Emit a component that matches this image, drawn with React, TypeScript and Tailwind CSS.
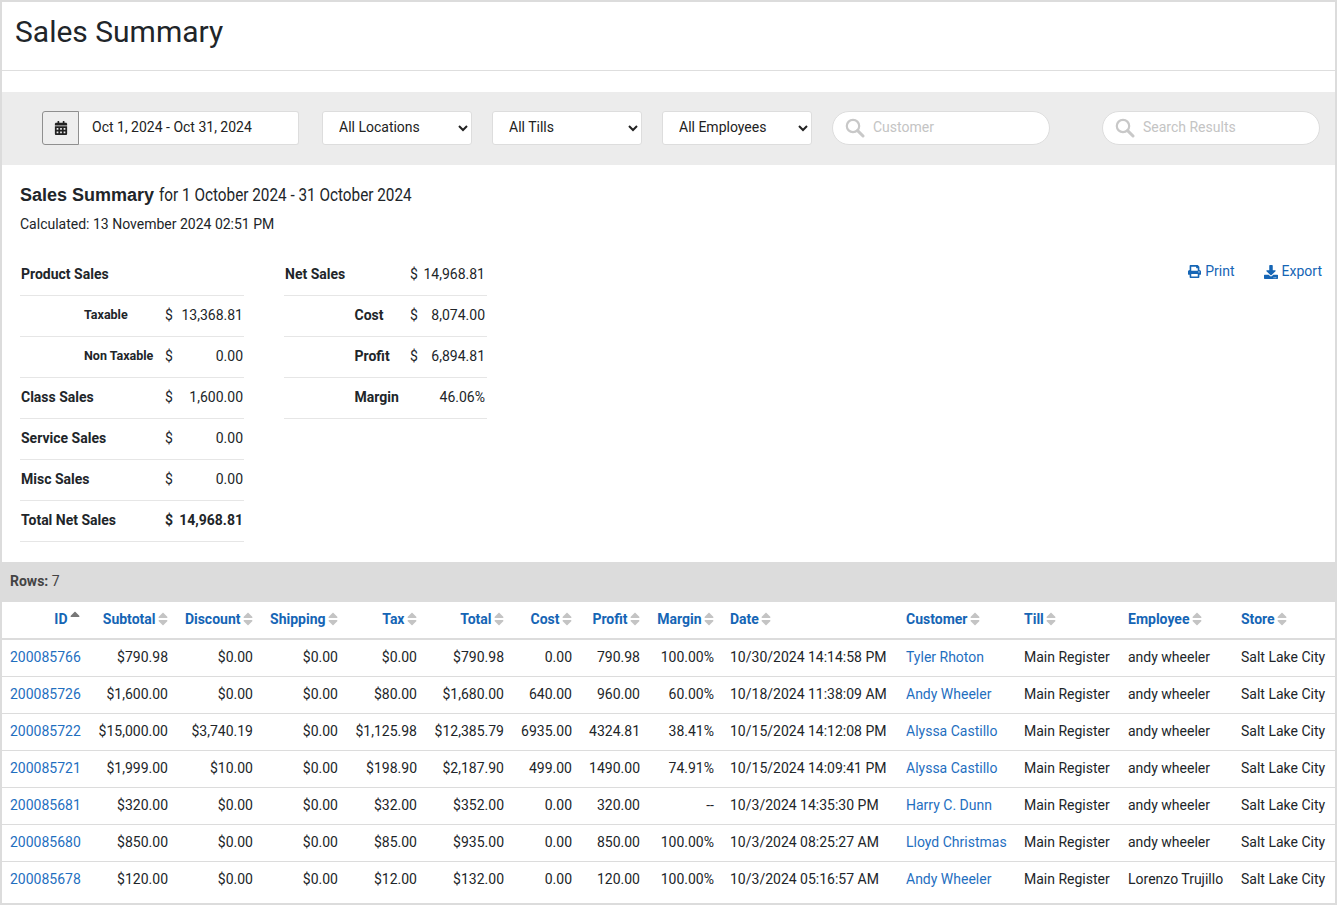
import { FaCalendarAlt, FaDownload, FaPrint, FaSort, FaSortUp } from "react-icons/fa";

const columns = [
  { label: "ID", w: "w-[86px]", right: true },
  { label: "Subtotal", w: "w-[88px]", right: true },
  { label: "Discount", w: "w-[85px]", right: true },
  { label: "Shipping", w: "w-[85px]", right: true },
  { label: "Tax", w: "w-[79px]", right: true },
  { label: "Total", w: "w-[87px]", right: true },
  { label: "Cost", w: "w-[68px]", right: true },
  { label: "Profit", w: "w-[68px]", right: true },
  { label: "Margin", w: "w-[74px]", right: true },
  { label: "Date", w: "w-[176px]", right: false },
  { label: "Customer", w: "w-[118px]", right: false },
  { label: "Till", w: "w-[104px]", right: false },
  { label: "Employee", w: "w-[113px]", right: false },
  { label: "Store", w: "w-[102px]", right: false },
];

const rows = [
  ["200085766", "$790.98", "$0.00", "$0.00", "$0.00", "$790.98", "0.00", "790.98", "100.00%", "10/30/2024 14:14:58 PM", "Tyler Rhoton", "Main Register", "andy wheeler", "Salt Lake City"],
  ["200085726", "$1,600.00", "$0.00", "$0.00", "$80.00", "$1,680.00", "640.00", "960.00", "60.00%", "10/18/2024 11:38:09 AM", "Andy Wheeler", "Main Register", "andy wheeler", "Salt Lake City"],
  ["200085722", "$15,000.00", "$3,740.19", "$0.00", "$1,125.98", "$12,385.79", "6935.00", "4324.81", "38.41%", "10/15/2024 14:12:08 PM", "Alyssa Castillo", "Main Register", "andy wheeler", "Salt Lake City"],
  ["200085721", "$1,999.00", "$10.00", "$0.00", "$198.90", "$2,187.90", "499.00", "1490.00", "74.91%", "10/15/2024 14:09:41 PM", "Alyssa Castillo", "Main Register", "andy wheeler", "Salt Lake City"],
  ["200085681", "$320.00", "$0.00", "$0.00", "$32.00", "$352.00", "0.00", "320.00", "--", "10/3/2024 14:35:30 PM", "Harry C. Dunn", "Main Register", "andy wheeler", "Salt Lake City"],
  ["200085680", "$850.00", "$0.00", "$0.00", "$85.00", "$935.00", "0.00", "850.00", "100.00%", "10/3/2024 08:25:27 AM", "Lloyd Christmas", "Main Register", "andy wheeler", "Salt Lake City"],
  ["200085678", "$120.00", "$0.00", "$0.00", "$12.00", "$132.00", "0.00", "120.00", "100.00%", "10/3/2024 05:16:57 AM", "Andy Wheeler", "Main Register", "Lorenzo Trujillo", "Salt Lake City"],
];

function SummaryRow({ label, sub, small, dollar, value, bold }: { label: string; sub?: boolean; small?: boolean; dollar?: boolean; value?: string; bold?: boolean }) {
  return (
    <div className={`flex h-[41px] items-center border-b border-[#e6e6e6] pb-[2px] pr-[1px] ${bold ? "font-bold" : ""}`}>
      <span className={`font-bold ${sub ? "ml-[64px]" : "ml-[1px]"} ${small ? "text-[12.5px]" : ""}`}>{label}</span>
      <span className="ml-auto flex w-[78px] shrink-0 justify-between">
        <span>{dollar ? "$" : ""}</span>
        <span>{value}</span>
      </span>
    </div>
  );
}

function NetRow({ label, sub, dollar, value }: { label: string; sub?: boolean; dollar?: boolean; value: string }) {
  return (
    <div className="flex h-[41px] items-center border-b border-[#e6e6e6] pb-[2px] pr-[2px]">
      <span className={`font-bold ${sub ? "ml-[70.5px]" : "ml-[1px]"}`}>{label}</span>
      <span className="ml-auto flex w-[75px] shrink-0 justify-between">
        <span>{dollar ? "$" : ""}</span>
        <span>{value}</span>
      </span>
    </div>
  );
}

function Pick({ label }: { label: string }) {
  return (
    <select className="h-[34px] w-[150px] rounded-[3px] border border-[#dddddd] bg-white pb-[2px] pl-3 pr-[1px] text-[14px] text-[#222]">
      <option>{label}</option>
    </select>
  );
}

function SearchBox({ placeholder }: { placeholder: string }) {
  return (
    <label className="flex h-[34px] w-[218px] items-center gap-[8px] rounded-full border border-[#dddddd] bg-white pl-[12px]">
      <svg width="20" height="20" viewBox="0 0 20 20" fill="none" stroke="#c8c8c8" className="shrink-0">
        <circle cx="8" cy="8" r="6.2" strokeWidth="2.2" />
        <path d="M12.6 12.6 18 18" strokeWidth="3" strokeLinecap="round" />
      </svg>
      <input placeholder={placeholder} className="w-full bg-transparent text-[14px] outline-none placeholder:text-[#c4c4c4]" />
    </label>
  );
}

export default function App() {
  return (
    <div className="h-[905px] overflow-hidden border-2 border-[#dcdcdc] bg-white font-['Roboto',sans-serif] text-[14px] text-[#212529]">
      <div className="flex h-[69px] items-start border-b border-[#dedede] pl-[13px] pt-[10px]">
        <h1 className="text-[30px] leading-[40px]">Sales Summary</h1>
      </div>
      <div className="mt-[21px] flex h-[73px] items-center bg-[#ececec] pb-[2px] pl-[40px]">
        <button className="flex h-[34px] w-[37px] items-center justify-center rounded-l-[3px] border border-[#8f8f8f] bg-[#eeeeee] text-[#222]">
          <FaCalendarAlt size={14} />
        </button>
        <div className="flex h-[34px] w-[220px] items-center rounded-r-[3px] border border-[#dddddd] border-l-0 bg-white pl-[13px] text-[#222]">
          Oct 1, 2024 - Oct 31, 2024
        </div>
        <div className="ml-[23px] flex gap-[20px]">
          <Pick label="All Locations" />
          <Pick label="All Tills" />
          <Pick label="All Employees" />
          <SearchBox placeholder="Customer" />
        </div>
        <div className="ml-[52px]">
          <SearchBox placeholder="Search Results" />
        </div>
      </div>
      <div className="h-[397px] px-[18px] pt-[18px]">
        <div className="flex items-baseline text-[18px] leading-[24px]">
          <b className="font-['Liberation_Sans',sans-serif] font-bold">Sales Summary</b>
          <span className="ml-[5px] origin-left scale-x-[0.85] whitespace-nowrap">for 1 October 2024 - 31 October 2024</span>
        </div>
        <div className="mt-[5px] leading-[24px]">Calculated: 13 November 2024 02:51 PM</div>
        <div className="mt-[19px] flex items-start">
          <div className="w-[224px]">
            <SummaryRow label="Product Sales" />
            <SummaryRow label="Taxable" sub small dollar value="13,368.81" />
            <SummaryRow label="Non Taxable" sub small dollar value="0.00" />
            <SummaryRow label="Class Sales" dollar value="1,600.00" />
            <SummaryRow label="Service Sales" dollar value="0.00" />
            <SummaryRow label="Misc Sales" dollar value="0.00" />
            <SummaryRow label="Total Net Sales" dollar value="14,968.81" bold />
          </div>
          <div className="ml-[40px] w-[203px]">
            <NetRow label="Net Sales" dollar value="14,968.81" />
            <NetRow label="Cost" sub dollar value="8,074.00" />
            <NetRow label="Profit" sub dollar value="6,894.81" />
            <NetRow label="Margin" sub value="46.06%" />
          </div>
          <div className="-mr-[5px] ml-auto flex items-center gap-[29px] pt-[6px] text-[#1565b5]">
            <a className="flex items-center gap-[4px]" href="#">
              <FaPrint size={13} />
              Print
            </a>
            <a className="flex items-center gap-[4px]" href="#">
              <FaDownload size={14} />
              Export
            </a>
          </div>
        </div>
      </div>
      <div className="flex h-[40px] items-center bg-[#dcdcdc] pb-[2px] pl-[8px] text-[#444]">
        <b className="font-bold">Rows:</b>&nbsp;7
      </div>
      <table className="w-full table-fixed border-collapse">
        <thead>
          <tr className="h-[37px] border-b-[2px] border-[#dcdcdc]">
            {columns.map((c) => (
              <th key={c.label} className={`${c.w} px-[8px] pb-[2px] font-bold text-[#1565b5] ${c.right ? "text-right" : "text-left"}`}>
                <span className="inline-flex items-center gap-[2.5px]">
                  {c.label}
                  {c.label === "ID" ? (
                    <FaSortUp className="-mt-[2px] h-[16px] w-[10px] text-[#777]" />
                  ) : (
                    <FaSort className="h-[16px] w-[10px] text-[#c4c4c4]" />
                  )}
                </span>
              </th>
            ))}
          </tr>
        </thead>
        <tbody>
          {rows.map((r) => (
            <tr key={r[0]} className="h-[37px] border-b border-[#dcdcdc] last:border-b-0">
              {r.map((v, i) => {
                const link = i === 0 || i === 10;
                return (
                  <td key={i} className={`whitespace-nowrap px-[8px] ${columns[i].right ? "text-right" : "text-left"} ${link ? "text-[#1f6fbf]" : ""}`}>
                    {link ? <a href="#">{v}</a> : v}
                  </td>
                );
              })}
            </tr>
          ))}
        </tbody>
      </table>
    </div>
  );
}
